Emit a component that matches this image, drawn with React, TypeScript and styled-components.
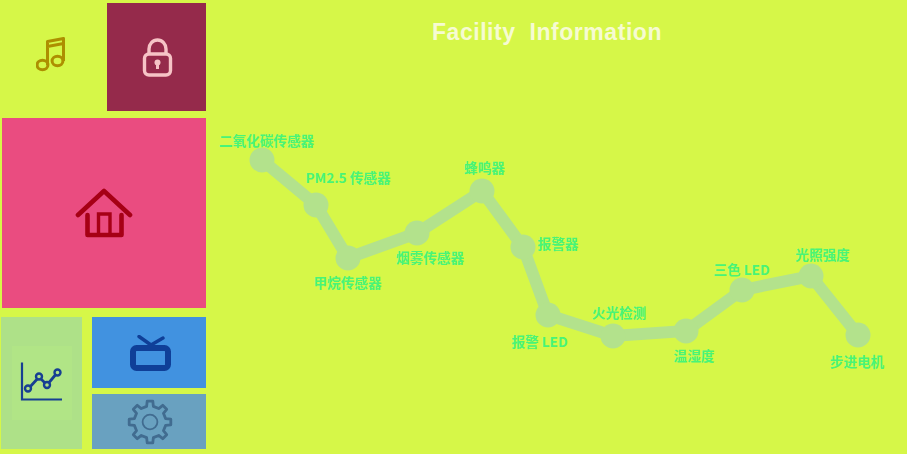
import React from "react";
import styled, { createGlobalStyle } from "styled-components";

const Global = createGlobalStyle`
  html, body { margin: 0; padding: 0; background: #d6f748; }
  #root { width: 907px; height: 454px; overflow: hidden; }
`;

const Page = styled.div`
  width: 907px;
  height: 454px;
  display: flex;
  background: #d6f748;
  font-family: "Noto Sans CJK SC", "Noto Sans", sans-serif;
`;

const Sidebar = styled.aside`
  width: 206px;
  flex: none;
  display: flex;
  flex-direction: column;
`;

const TopRow = styled.div`
  display: flex;
  gap: 4px;
  height: 108px;
  margin-top: 3px;
`;

const Tile = styled.div<{ $bg: string; $w?: number; $h?: number }>`
  display: flex;
  align-items: center;
  justify-content: center;
  background: ${(p) => p.$bg};
  ${(p) => (p.$w ? `width: ${p.$w}px; flex: none;` : "")}
  ${(p) => (p.$h ? `height: ${p.$h}px; flex: none;` : "")}
`;

const HomeTile = styled(Tile)`
  height: 190px;
  margin: 7px 0 0 2px;
`;

const BottomRow = styled.div`
  display: flex;
  gap: 10px;
  height: 132px;
  margin: 9px 0 0 1px;
`;

const ChartTile = styled(Tile)`
  width: 81px;
  flex: none;
`;

const ChartInner = styled.div`
  width: 60px;
  height: 74px;
  display: flex;
  align-items: center;
  justify-content: center;
  background: #b1e586;
`;

const RightStack = styled.div`
  flex: 1;
  display: flex;
  flex-direction: column;
  gap: 6px;
`;

const Main = styled.main`
  flex: 1;
  position: relative;
`;

const Title = styled.h1`
  margin: 0;
  padding: 18px 19px 0 0;
  text-align: center;
  font: bold 23px/28px "Liberation Sans", Arial, sans-serif;
  letter-spacing: 0.55px;
  white-space: pre;
  color: #f6fbd2;
`;

const Track = styled.svg`
  position: absolute;
  left: 0;
  top: 0;
`;

const NodeLabel = styled.span<{ $x: number; $y: number }>`
  position: absolute;
  left: ${(p) => p.$x}px;
  top: ${(p) => p.$y}px;
  transform: translate(-50%, -50%);
  font-size: 13.6px;
  font-weight: 700;
  line-height: 18px;
  white-space: nowrap;
  color: #48f478;
`;

const points: [number, number][] = [
  [262, 160], [316, 205], [348, 258], [417, 233], [482, 191], [523, 247],
  [548, 315], [613, 336], [686, 331], [742, 290], [811, 276], [858, 335],
];

const labels: [string, number, number][] = [
  ["二氧化碳传感器", 266.5, 140],
  ["PM2.5 传感器", 348, 177],
  ["甲烷传感器", 347.5, 282],
  ["烟雾传感器", 430, 257],
  ["蜂鸣器", 484.5, 167],
  ["报警器", 558, 243],
  ["报警 LED", 539.5, 341],
  ["火光检测", 619, 312],
  ["温湿度", 694, 355],
  ["三色 LED", 741.5, 269],
  ["光照强度", 822.5, 254],
  ["步进电机", 857, 361],
];

function gearPath(cx: number, cy: number, teeth: number, ro: number, ri: number) {
  const step = (Math.PI * 2) / teeth;
  const pts: string[] = [];
  const at = (r: number, a: number) =>
    `${(cx + r * Math.cos(a)).toFixed(2)} ${(cy + r * Math.sin(a)).toFixed(2)}`;
  for (let i = 0; i < teeth; i++) {
    const a = i * step - Math.PI / 2;
    pts.push(at(ri, a - step * 0.27), at(ro, a - step * 0.17), at(ro, a + step * 0.17), at(ri, a + step * 0.27));
  }
  return `M${pts.join("L")}Z`;
}

export default function App() {
  return (
    <Page>
      <Global />
      <Sidebar>
        <TopRow>
          <Tile $bg="#d6f748" $w={103}>
            <svg width="32" height="40" viewBox="0 0 32 40" fill="none" stroke="#ad8f00" strokeWidth="3" strokeLinejoin="round">
              <ellipse cx="6.5" cy="28" rx="5.4" ry="4.8" />
              <ellipse cx="21.5" cy="24" rx="5.4" ry="4.8" />
              <path d="M11.5 28V4.5L27.5 1.5V24M11.5 9.5L27.5 6.5" />
            </svg>
          </Tile>
          <Tile $bg="#952a4b" $w={99}>
            <svg width="32" height="40" viewBox="0 0 32 40" fill="none" stroke="#f6c3c6" strokeWidth="3.4">
              <path d="M8 17V12A8.5 9 0 0 1 25 12V17" />
              <rect x="3.5" y="17" width="26" height="21" rx="4.5" />
              <circle cx="16.5" cy="25.5" r="3" fill="#f6c3c6" stroke="none" />
              <path d="M16.5 26V32" strokeWidth="3" />
            </svg>
          </Tile>
        </TopRow>
        <HomeTile $bg="#ea4c80">
          <svg width="58" height="50" viewBox="0 0 58 50" fill="none" stroke="#a60015" strokeWidth="4.6" strokeLinecap="round" strokeLinejoin="round">
            <path d="M3 27L29 3L55 27" />
            <path d="M12.5 27V47H46.5V27" />
            <path d="M23.5 47V26H35V47" strokeWidth="3.4" strokeLinecap="butt" strokeLinejoin="miter" />
          </svg>
        </HomeTile>
        <BottomRow>
          <ChartTile $bg="#aee188">
            <ChartInner>
              <svg width="44" height="42" viewBox="0 0 44 42" fill="none" stroke="#173f92">
                <path d="M2 0.5V37.5H42" strokeWidth="2.2" />
                <path d="M9 26L19 15L27 23L37 11" strokeWidth="2.8" />
                <g strokeWidth="2.4" fill="#aee188">
                  <circle cx="8" cy="26.5" r="3" />
                  <circle cx="19" cy="14.5" r="3" />
                  <circle cx="27" cy="23" r="3" />
                  <circle cx="37.5" cy="10.5" r="3" />
                </g>
              </svg>
            </ChartInner>
          </ChartTile>
          <RightStack>
            <Tile $bg="#4192e0" $h={71}>
              <svg width="46" height="36" viewBox="0 0 46 36" fill="none" stroke="#0f3f98" strokeLinecap="round">
                <path d="M25 10L13 1.5M25 10L37 3" strokeWidth="3.4" />
                <rect x="7" y="13" width="35" height="20" rx="3.5" strokeWidth="6" />
              </svg>
            </Tile>
            <Tile $bg="#69a1c0" $h={55}>
              <svg width="48" height="46" viewBox="0 0 48 46" fill="none" stroke="#416c90">
                <path d={gearPath(25, 23, 8, 21, 16)} strokeWidth="2.8" strokeLinejoin="round" />
                <circle cx="25" cy="23" r="7.4" strokeWidth="1.8" />
              </svg>
            </Tile>
          </RightStack>
        </BottomRow>
      </Sidebar>
      <Main>
        <Title>{"Facility  Information"}</Title>
        <Track width="701" height="454" viewBox="206 0 701 454">
          <polyline
            points={points.map((p) => p.join(",")).join(" ")}
            fill="none"
            stroke="#b3e28c"
            strokeWidth="12"
          />
          {points.map(([x, y]) => (
            <circle key={x} cx={x} cy={y} r="12.5" fill="#b3e28c" />
          ))}
        </Track>
        {labels.map(([text, x, y]) => (
          <NodeLabel key={text} $x={x - 206} $y={y}>
            {text}
          </NodeLabel>
        ))}
      </Main>
    </Page>
  );
}
